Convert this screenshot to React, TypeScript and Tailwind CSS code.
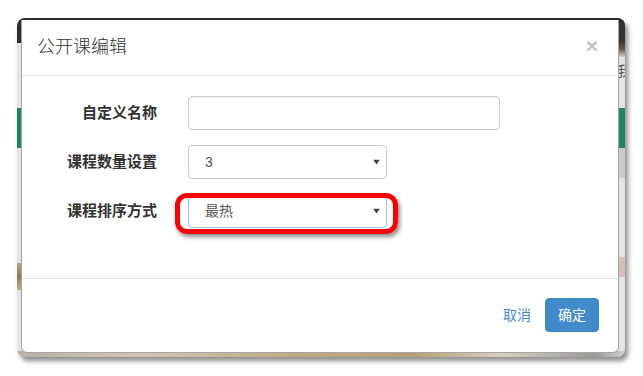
import React from "react";

function Arrow() {
  return (
    <svg width="7" height="5" viewBox="0 0 7 5" className="absolute right-[6px] top-1/2 -translate-y-1/2">
      <path d="M0 0 L7 0 L3.5 5 Z" fill="#444" />
    </svg>
  );
}

export default function App() {
  return (
    <div
      className="w-[643px] h-[376px] bg-white pt-[18px] pl-[17px]"
      style={{ fontFamily: '"Liberation Sans", "Noto Sans CJK SC", sans-serif' }}
    >
      <div className="relative w-[608px] rounded-[8px] overflow-hidden bg-[#e4e4e4] pt-[2px] pl-[4px] pb-[4px] shadow-[3px_4px_5px_rgba(0,0,0,0.45)]">
        {/* background page behind the modal */}
        <div className="absolute left-0 top-0 w-full h-[25px] bg-[#2e2e2e]" />
        <div className="absolute right-0 top-0 w-[8px] h-[39px] bg-[linear-gradient(180deg,#2e2e2e_0%,#3a3530_60%,#6b5a48_80%,#cfcfcf_100%)]" />
        <div className="absolute right-[-6px] top-[45px] text-[14px] leading-[16px] text-[#555]">我</div>
        <div className="absolute left-0 top-[90px] w-full h-[40px] bg-[#1d8763]" />
        <div className="absolute right-0 top-[130px] w-[8px] h-[30px] bg-[#c9c9c9]" />
        <div className="absolute left-0 top-[245px] w-[6px] h-[27px] bg-[linear-gradient(180deg,#b9a57d,#8f7a55,#c4b08a)]" />
        <div className="absolute right-0 top-[239px] w-[8px] h-[20px] bg-[#d9bcbc]" />
        <div className="absolute left-0 bottom-0 w-full h-[6px] bg-[linear-gradient(90deg,#b9b2a4_0%,#cfc6b5_20%,#c2ab7f_45%,#b79f72_65%,#d6d0c4_80%,#9a9a9a_95%,#cfcfcf_100%)]" />

        {/* modal */}
        <div className="relative w-[598px] bg-white border-x border-b border-[rgba(0,0,0,0.35)] rounded-b-[6px]">
          <div className="flex items-center justify-between h-[56px] pl-[15px] pr-[20px] border-b border-[#e5e5e5]">
            <div className="text-[18px] leading-[26px] font-light text-[#333] mt-[-2px]">公开课编辑</div>
            <div className="text-[21px] leading-[21px] font-bold text-[#c4c4c4] mt-[-4px]">×</div>
          </div>

          <div className="pl-[20px] pr-[20px] pt-[20px] pb-[35px] flex flex-col gap-[15px]">
            <div className="flex items-center gap-[31px]">
              <div className="w-[115px] text-right text-[15px] font-bold text-[#333]">自定义名称</div>
              <div className="w-[312px] h-[34px] border border-[#cccccc] rounded-[4px] shadow-[inset_0_1px_1px_rgba(0,0,0,0.075)]" />
            </div>
            <div className="flex items-center gap-[31px]">
              <div className="w-[115px] text-right text-[15px] font-bold text-[#333]">课程数量设置</div>
              <div className="relative w-[199px] h-[34px] border border-[#cccccc] rounded-[4px] flex items-center pl-[16px] text-[14px] text-[#555]">
                3
                <Arrow />
              </div>
            </div>
            <div className="flex items-center gap-[31px]">
              <div className="w-[115px] text-right text-[15px] font-bold text-[#333]">课程排序方式</div>
              <div className="relative w-[199px] h-[34px] border border-[#9cc0e0] rounded-[4px] flex items-center pl-[16px] text-[14px] text-[#555]">
                最热
                <Arrow />
                <div className="absolute left-[-14px] top-[-2px] w-[223px] h-[41px] border-[5px] border-[#ff0000] rounded-[12px] shadow-[2px_3px_4px_rgba(0,0,0,0.45)]" />
              </div>
            </div>
          </div>

          <div className="mt-[15px] border-t border-[#e5e5e5] pt-[19px] pb-[20px] pr-[19px] flex justify-end items-center gap-[14px]">
            <div className="text-[14px] text-[#428bca]">取消</div>
            <div className="h-[34px] px-[12px] rounded-[4px] bg-[#428bca] border border-[#3d85c4] text-white text-[14px] flex items-center">确定</div>
          </div>
        </div>
      </div>
    </div>
  );
}
